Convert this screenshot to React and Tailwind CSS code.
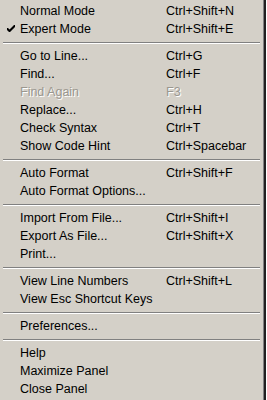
import React from 'react';

const sections = [
  [
    { label: 'Normal Mode', key: 'Ctrl+Shift+N' },
    { label: 'Expert Mode', key: 'Ctrl+Shift+E', checked: true },
  ],
  [
    { label: 'Go to Line...', key: 'Ctrl+G' },
    { label: 'Find...', key: 'Ctrl+F' },
    { label: 'Find Again', key: 'F3', disabled: true },
    { label: 'Replace...', key: 'Ctrl+H' },
    { label: 'Check Syntax', key: 'Ctrl+T' },
    { label: 'Show Code Hint', key: 'Ctrl+Spacebar' },
  ],
  [
    { label: 'Auto Format', key: 'Ctrl+Shift+F' },
    { label: 'Auto Format Options...' },
  ],
  [
    { label: 'Import From File...', key: 'Ctrl+Shift+I' },
    { label: 'Export As File...', key: 'Ctrl+Shift+X' },
    { label: 'Print...' },
  ],
  [
    { label: 'View Line Numbers', key: 'Ctrl+Shift+L' },
    { label: 'View Esc Shortcut Keys' },
  ],
  [{ label: 'Preferences...' }],
  [
    { label: 'Help' },
    { label: 'Maximize Panel' },
    { label: 'Close Panel' },
  ],
];

function Check() {
  return (
    <svg width="8" height="8" viewBox="0 0 8 8" className="block">
      <path d="M0 3 L0 5 L2 7 L3 7 L8 2 L8 0 L7 0 L2.5 4.5 L1 3 Z" fill="#000" />
    </svg>
  );
}

function Item({ item }) {
  const textCls = item.disabled
    ? 'text-[#9a978f] [text-shadow:1px_1px_0_#ffffff]'
    : 'text-black';
  return (
    <div className={`flex h-[18px] items-center whitespace-nowrap ${textCls}`}>
      <div className="flex w-[20px] justify-center pl-[1px]">
        {item.checked && <Check />}
      </div>
      <div className="w-[146px]">{item.label}</div>
      <div>{item.key}</div>
    </div>
  );
}

function Separator() {
  return (
    <div className="flex h-[9px] flex-col justify-center px-[3px]">
      <div className="h-px bg-[#808080]" />
      <div className="h-px bg-white" />
    </div>
  );
}

export default function App() {
  return (
    <div
      className="flex h-[400px] w-[267px] bg-[#d4d0c8] text-[12.5px] leading-none"
      style={{ fontFamily: '"Liberation Sans", Arial, sans-serif' }}
    >
      <div className="flex-1 pt-[2px]">
        {sections.map((sec, i) => (
          <React.Fragment key={i}>
            {i > 0 && <Separator />}
            {sec.map((item) => (
              <Item key={item.label} item={item} />
            ))}
          </React.Fragment>
        ))}
      </div>
      <div className="w-px bg-[#808080]" />
      <div className="w-[2px] bg-[#202020]" />
      <div className="w-px bg-white" />
    </div>
  );
}
